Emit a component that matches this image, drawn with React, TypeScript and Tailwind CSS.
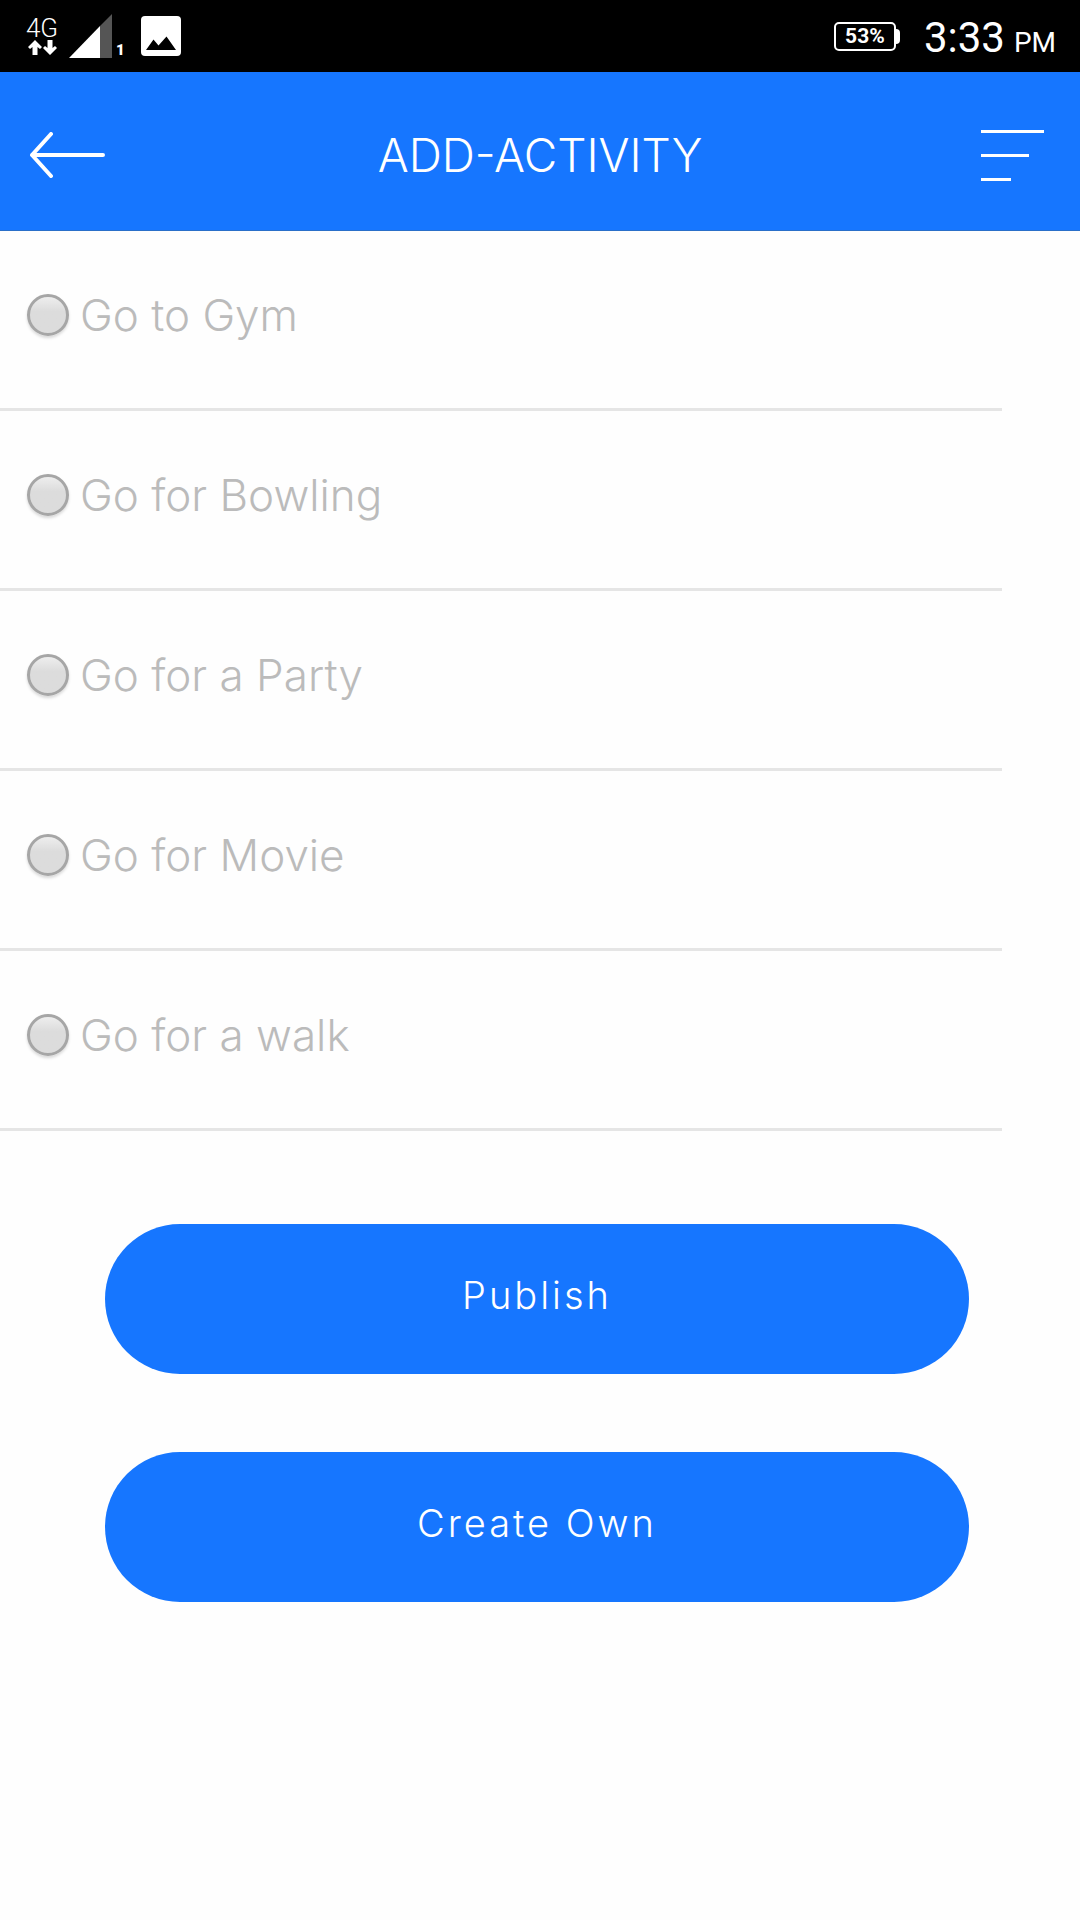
import { useState } from 'react';

const activities = ['Go to Gym', 'Go for Bowling', 'Go for a Party', 'Go for Movie', 'Go for a walk'];

function StatusBar() {
  return (
    <div className="flex h-[72px] items-center justify-between bg-black pr-6 pl-[27px] font-['Roboto',sans-serif] text-white">
      <div className="flex items-center">
        <div className="flex w-[30px] flex-col items-center">
          <span className="text-[26px] leading-[23px] font-light">4G</span>
          <svg className="h-[15px] w-[29px]" viewBox="0 0 29 15" fill="currentColor">
            <path d="M7 0 L14 7 L12 9 L9.500 7 V15 H4.500 V7 L2 9 L0 7 Z" />
            <path d="M22 15 L29 8 L27 6 L24.500 8 V0 H19.500 V8 L17 6 L15 8 Z" />
          </svg>
        </div>
        {/* signal strength */}
        <svg className="ml-3 h-11 w-[43px]" viewBox="0 0 43 44">
          <path d="M43 0 V44 H31 V12 Z" fill="#555" />
          <path d="M31 12 V44 H0 Z" fill="#fff" />
        </svg>
        <span className="ml-1 pt-[28px] text-[15px] leading-4 font-black">1</span>
        <svg className="ml-4 h-10 w-10" viewBox="0 0 40 40">
          <rect width="40" height="40" rx="4" fill="#fff" />
          <path d="M5 34 L12.500 23.500 L17.500 29.500 L25.500 20.500 L35 34 Z" fill="#000" />
        </svg>
      </div>
      <div className="flex items-center gap-6">
        <div className="flex items-center">
          <div className="flex h-[29px] w-[62px] items-center justify-center rounded-[5px] border-2 border-white text-[21px] leading-none font-bold">
            53%
          </div>
          <div className="h-[15px] w-1 rounded-r-sm bg-white" />
        </div>
        <div className="flex items-baseline gap-[9px] pt-[3px]">
          <span className="text-[42px] leading-[56px]">3:33</span>
          <span className="text-[28px]">PM</span>
        </div>
      </div>
    </div>
  );
}

function Header() {
  return (
    <header className="flex h-[159px] items-center justify-between border-b border-[#2a6fc9] bg-[#1676ff] px-[30px] pt-2 text-white">
      <button type="button" aria-label="Back">
        <svg
          className="h-[46px] w-[75px]"
          viewBox="0 0 75 46"
          fill="none"
          stroke="currentColor"
          strokeWidth="4"
          strokeLinecap="round"
          strokeLinejoin="round"
        >
          <path d="M73 23 H2 M21 2 L2 23 L21 44" />
        </svg>
      </button>
      <h1 className="text-[46px] leading-[56px] font-light">ADD-ACTIVITY</h1>
      <button type="button" aria-label="Menu" className="flex w-[75px] flex-col gap-[21px] px-1.5">
        <span className="h-[3px] w-full bg-white" />
        <span className="h-[3px] w-12 bg-white" />
        <span className="h-[3px] w-[30px] bg-white" />
      </button>
    </header>
  );
}

export default function App() {
  const [selected, setSelected] = useState('');

  return (
    <div className="min-h-screen bg-[#fefefe] font-['Inter',sans-serif]">
      <StatusBar />
      <Header />

      <main>
        <div role="radiogroup" aria-label="Activities" className="mr-[78px]">
          {activities.map((activity) => (
            <label
              key={activity}
              className="flex items-center gap-[11px] border-b-[3px] border-[#e5e5e5] pt-[63px] pb-[72px] pl-[27px]"
            >
              <input
                type="radio"
                name="activity"
                value={activity}
                checked={selected === activity}
                onChange={() => setSelected(activity)}
                className="size-[42px] shrink-0 appearance-none rounded-full border-[3px] border-[#a6a6a6] bg-linear-to-b from-[#eeeeee] to-[#dcdcdc] to-40% shadow-[0_2px_3px_rgba(0,0,0,0.15)] checked:to-[#1676ff]"
              />
              <span className="text-[44px] leading-[42px] font-light text-[#bbbbbb]">{activity}</span>
            </label>
          ))}
        </div>

        {/* actions */}
        <div className="mt-[93px] mr-[111px] ml-[105px] flex flex-col gap-[78px]">
          <button type="button" className="h-[150px] rounded-full bg-[#1676ff] pb-2 text-[38px] font-light tracking-[3px] text-white">
            Publish
          </button>
          <button type="button" className="h-[150px] rounded-full bg-[#1676ff] pb-2 text-[38px] font-light tracking-[3px] text-white">
            Create Own
          </button>
        </div>
      </main>
    </div>
  );
}
